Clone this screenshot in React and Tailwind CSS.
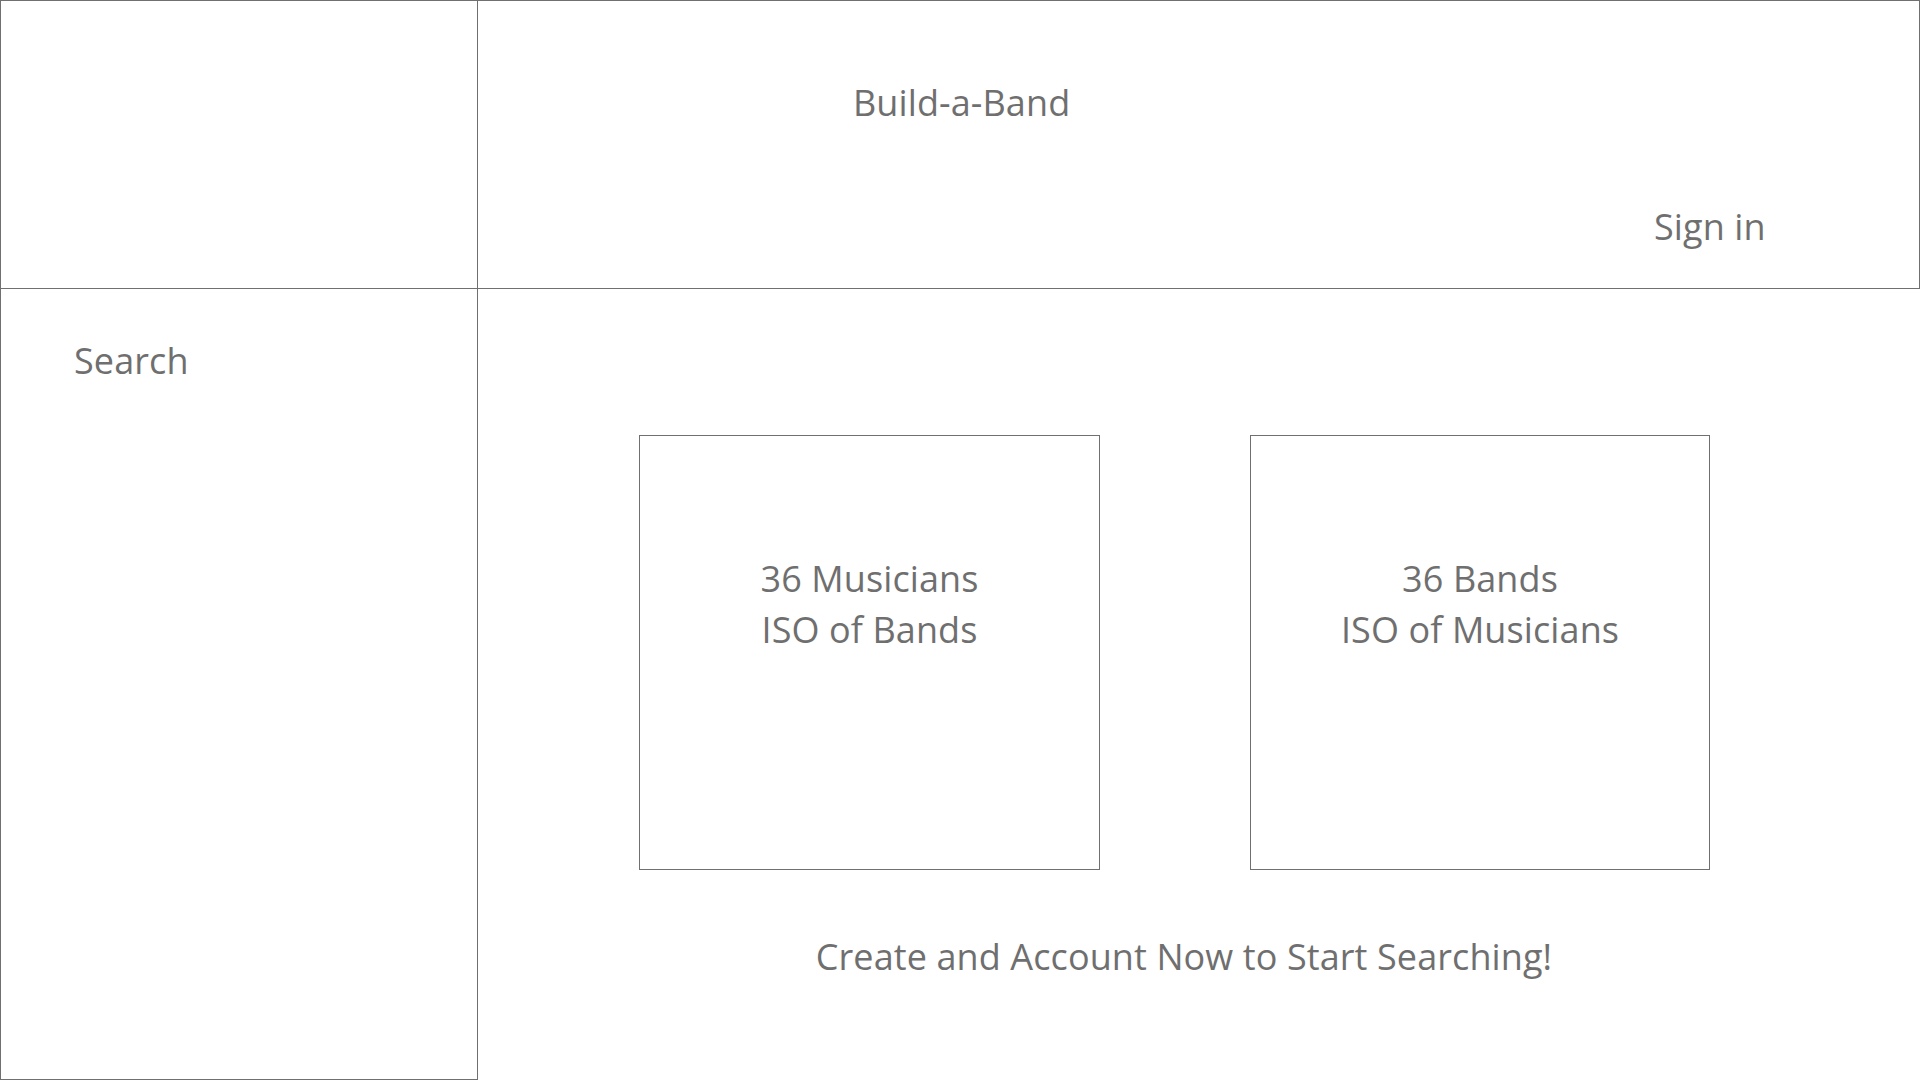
export default function App() {
  return (
    <div className="w-[1920px] h-[1080px] bg-white text-[#6f6f6f] flex flex-col font-['Open_Sans',sans-serif]">
      {/* Header row */}
      <div className="flex h-[289px]">
        <div className="w-[478px] border-t border-l border-r border-b border-[#707070]" />
        <div className="w-[1442px] border-t border-r border-b border-[#707070] flex flex-col">
          <div className="pt-[84px] pl-[375px] text-[36px] leading-[36px] tracking-[0.1px]">
            Build-a-Band
          </div>
          <div className="pt-[88px] pl-[1176px] text-[36px] leading-[36px] tracking-[0.1px]">
            Sign in
          </div>
        </div>
      </div>
      {/* Body row */}
      <div className="flex h-[791px]">
        <div className="w-[478px] border-l border-r border-b border-[#707070] pl-[73px] pt-[54px]">
          <div className="text-[36px] leading-[36px] tracking-[0.1px]">Search</div>
        </div>
        <div className="flex-1 flex flex-col pt-[146px]">
          <div className="flex gap-[150px] pl-[161px]">
            <div className="w-[461px] h-[435px] border border-[#707070] pt-[117px] text-center text-[36px] leading-[51px] tracking-[0.1px]">
              <div>36 Musicians</div>
              <div>ISO of Bands</div>
            </div>
            <div className="w-[460px] h-[435px] border border-[#707070] pt-[117px] text-center text-[36px] leading-[51px] tracking-[0.1px]">
              <div>36 Bands</div>
              <div>ISO of Musicians</div>
            </div>
          </div>
          <div className="w-[1412px] mt-[61px] text-center text-[36px] leading-[51px] tracking-[0.1px]">
            Create and Account Now to Start Searching!
          </div>
        </div>
      </div>
    </div>
  );
}
